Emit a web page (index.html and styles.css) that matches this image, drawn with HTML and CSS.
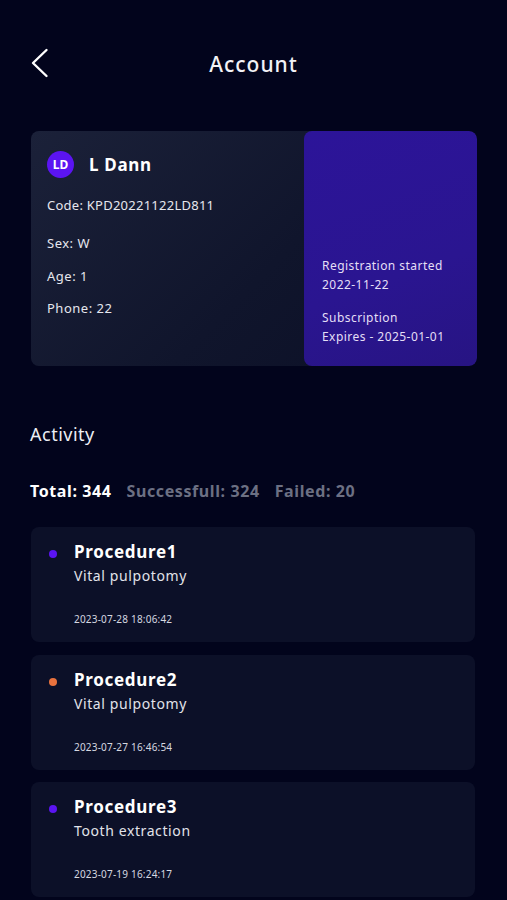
FILE: index.html
```html
<!DOCTYPE html>
<html lang="en">
<head>
<meta charset="utf-8">
<title>Account</title>
<link rel="stylesheet" href="styles.css">
</head>
<body>
<div class="screen">
  <header class="topbar">
    <button class="back" aria-label="Back">
      <svg width="20" height="30" viewBox="0 0 20 30"><path d="M16.5 2 L3 15 L16.5 28" fill="none" stroke="#ffffff" stroke-width="2.4" stroke-linecap="round" stroke-linejoin="round"/></svg>
    </button>
    <h1 class="title">Account</h1>
  </header>

  <section class="profile">
    <div class="profile-main">
      <div class="name-row">
        <span class="avatar">LD</span>
        <span class="name">L Dann</span>
      </div>
      <p class="code">Code: KPD20221122LD811</p>
      <p class="field">Sex: W</p>
      <p class="field">Age: 1</p>
      <p class="field">Phone: 22</p>
    </div>
    <div class="profile-side">
      <div class="side-block">
        <p>Registration started</p>
        <p>2022-11-22</p>
      </div>
      <div class="side-block">
        <p>Subscription</p>
        <p>Expires - 2025-01-01</p>
      </div>
    </div>
  </section>

  <h2 class="section-title">Activity</h2>

  <div class="stats">
    <span class="stat stat-total">Total: 344</span>
    <span class="stat">Successfull: 324</span>
    <span class="stat">Failed: 20</span>
  </div>

  <ul class="list">
    <li class="item">
      <span class="dot dot-purple"></span>
      <div class="item-body">
        <div class="item-title">Procedure1</div>
        <div class="item-sub">Vital pulpotomy</div>
        <div class="item-date">2023-07-28 18:06:42</div>
      </div>
    </li>
    <li class="item">
      <span class="dot dot-orange"></span>
      <div class="item-body">
        <div class="item-title">Procedure2</div>
        <div class="item-sub">Vital pulpotomy</div>
        <div class="item-date">2023-07-27 16:46:54</div>
      </div>
    </li>
    <li class="item">
      <span class="dot dot-purple"></span>
      <div class="item-body">
        <div class="item-title">Procedure3</div>
        <div class="item-sub">Tooth extraction</div>
        <div class="item-date">2023-07-19 16:24:17</div>
      </div>
    </li>
  </ul>
</div>
</body>
</html>
```

FILE: styles.css
```css
* { box-sizing: border-box; }
html, body {
  margin: 0;
  padding: 0;
  background: #02041c;
}
body {
  font-family: "Noto Sans", "DejaVu Sans", sans-serif;
  color: #ffffff;
  overflow: hidden;
}
p { margin: 0; }

.screen {
  width: 507px;
  height: 900px;
  padding: 0 30px 0 30px;
}

.topbar {
  position: relative;
  height: 131px;
  display: flex;
  align-items: flex-start;
  justify-content: center;
  padding-top: 50px;
}
.back {
  position: absolute;
  left: 0;
  top: 48px;
  background: none;
  border: 0;
  padding: 0;
  width: 20px;
  height: 30px;
  cursor: pointer;
}
.back svg { display: block; }
.title {
  margin: 0;
  font-size: 21px;
  font-weight: 500;
  line-height: 28px;
  letter-spacing: 1px;
  color: #f2f2f6;
}

.profile {
  display: flex;
  height: 235px;
  margin-left: 1px;
  border-radius: 8px;
  background: linear-gradient(135deg, #1b2139 0%, #10152c 55%, #0b0f26 100%);
  overflow: hidden;
}
.profile-main {
  flex: 1;
  padding: 20px 0 0 16px;
}
.name-row {
  display: flex;
  align-items: center;
  gap: 15px;
  height: 26px;
}
.avatar {
  width: 27px;
  height: 27px;
  border-radius: 50%;
  background: #5b14f2;
  display: flex;
  align-items: center;
  justify-content: center;
  font-size: 12px;
  font-weight: 700;
  color: #ffffff;
}
.name {
  font-size: 17px;
  font-weight: 700;
  letter-spacing: 0.7px;
  color: #ffffff;
}
.code {
  font-size: 13px;
  margin-top: 19px;
  letter-spacing: 0.25px;
  color: #e6e7ee;
}
.field {
  font-size: 13px;
  color: #e6e7ee;
  line-height: 18px;
  letter-spacing: 0.5px;
}
.code + .field { margin-top: 20px; }
.field + .field { margin-top: 14.5px; }

.profile-side {
  width: 173px;
  border-radius: 8px;
  background: linear-gradient(160deg, #2c1499 0%, #2a1590 60%, #271483 100%);
  padding: 0 6px 20px 18px;
  display: flex;
  flex-direction: column;
  justify-content: flex-end;
  gap: 14px;
}
.side-block p {
  font-size: 12px;
  line-height: 19px;
  letter-spacing: 0.45px;
  color: #e4dff6;
}

.section-title {
  margin: 57px 0 0 0;
  font-size: 18px;
  font-weight: 400;
  line-height: 22px;
  letter-spacing: 0.5px;
  color: #eceef4;
}

.stats {
  display: flex;
  gap: 15px;
  margin-top: 36px;
  font-size: 16px;
  font-weight: 700;
  line-height: 20px;
  letter-spacing: 0.6px;
}
.stat { color: #6c7083; }
.stat-total { color: #ffffff; }

.list {
  list-style: none;
  margin: 26px 2px 0 1px;
  padding: 0;
  display: flex;
  flex-direction: column;
  gap: 12.5px;
}
.item {
  height: 115px;
  border-radius: 8px;
  background: #0c1028;
  display: flex;
  align-items: flex-start;
  padding: 14px 0 0 18px;
  gap: 17px;
}
.dot {
  width: 8px;
  height: 8px;
  border-radius: 50%;
  margin-top: 9px;
  flex: none;
}
.dot-purple { background: #5b14f2; }
.dot-orange { background: #e9723e; }
.item-title {
  font-size: 17px;
  font-weight: 700;
  line-height: 22px;
  letter-spacing: 0.7px;
  color: #ffffff;
}
.item-sub {
  font-size: 14px;
  line-height: 20px;
  margin-top: 3px;
  letter-spacing: 0.6px;
  color: #e2e3ea;
}
.item-date {
  font-size: 10px;
  line-height: 14px;
  margin-top: 26px;
  letter-spacing: 0.2px;
  color: #d6d8e0;
}
```
